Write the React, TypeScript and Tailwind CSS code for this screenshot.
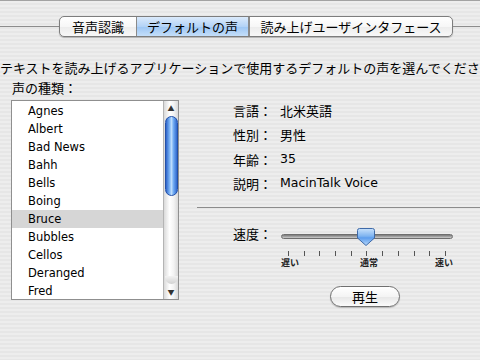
import React from 'react';

const VOICES = ['Agnes', 'Albert', 'Bad News', 'Bahh', 'Bells', 'Boing', 'Bruce', 'Bubbles', 'Cellos', 'Deranged', 'Fred'];

const INFO = [
  { label: '言語：', value: '北米英語' },
  { label: '性別：', value: '男性' },
  { label: '年齢：', value: '35' },
  { label: '説明：', value: 'MacinTalk Voice' },
];

const TABS = [
  { name: '音声認識', width: 'w-[76px]', selected: false },
  { name: 'デフォルトの声', width: 'w-[113px]', selected: true },
  { name: '読み上げユーザインタフェース', width: 'flex-1', selected: false },
];

const Thumb: React.FC = () => (
  <svg width="20" height="20" viewBox="0 0 20 20">
    <defs>
      <linearGradient id="thumbFill" x1="0" y1="0" x2="0" y2="1">
        <stop offset="0" stopColor="#c9e2fb" />
        <stop offset="0.45" stopColor="#7fb4f0" />
        <stop offset="0.55" stopColor="#5d9ded" />
        <stop offset="1" stopColor="#b7d8fa" />
      </linearGradient>
    </defs>
    <path d="M3.5 1.5 H16.5 Q18.5 1.5 18.5 3.5 V11 L10 18.5 L1.5 11 V3.5 Q1.5 1.5 3.5 1.5 Z" fill="url(#thumbFill)" stroke="#3f6aa8" strokeWidth="1" />
  </svg>
);

export default function App() {
  return (
    <div className="w-[480px] h-[360px] overflow-hidden border-t border-[#a2a2a2] bg-[repeating-linear-gradient(180deg,#ededed_0px,#ededed_2px,#e6e6e6_2px,#e6e6e6_4px)] text-[13px] text-black font-['Noto_Sans_CJK_JP',sans-serif]">
      {/* tabs */}
      <div className="mt-[15px] flex items-center h-[21px]">
        <div className="h-px w-[59px] bg-[#8c8c8c]" />
        <div className="flex h-[21px] w-[394px] rounded-[5px] border border-[#7d7d7d] overflow-hidden bg-[linear-gradient(#ffffff,#f7f7f7_50%,#ececec_51%,#f8f8f8)] shadow-[0_1px_1px_rgba(0,0,0,0.25)]">
          {TABS.map((t, i) => (
            <div
              key={t.name}
              className={
                'flex items-center justify-center leading-none ' +
                t.width +
                (i > 0 ? ' border-l border-[#8a8a8a]' : '') +
                (t.selected
                  ? ' border-r border-[#6b8ec4] bg-[linear-gradient(#dbeafb,#b3d3f7_50%,#9cc6f4_51%,#c4def9)]'
                  : '')
              }
            >
              {t.name}
            </div>
          ))}
        </div>
        <div className="h-px flex-1 bg-[#8c8c8c]" />
      </div>

      <p className="mt-[23px] whitespace-nowrap leading-[16px]">
        テキストを読み上げるアプリケーションで使用するデフォルトの声を選んでください。
      </p>
      <p className="mt-[4px] pl-[12px] leading-[16px]">声の種類：</p>

      <div className="mt-[4px] flex">
        {/* voice list */}
        <div className="ml-[11px] flex h-[200px] w-[168px] border border-[#8f8f8f] bg-white">
          <div className="flex-1 pt-[1px] font-['DejaVu_Sans',sans-serif] text-[11.5px]">
            {VOICES.map((v) => (
              <div
                key={v}
                className={'h-[18px] pl-[16px] leading-[18px] ' + (v === 'Bruce' ? 'bg-[#d6d6d6]' : '')}
              >
                {v}
              </div>
            ))}
          </div>
          <div className="flex w-[15px] flex-col border-l border-[#b4b4b4] bg-[linear-gradient(90deg,#dadada,#ffffff_40%,#f3f3f3_70%,#d9d9d9)]">
            <div className="flex h-[15px] items-center justify-center text-[7px] leading-none text-[#333]">▲</div>
            <div className="mx-auto h-[80px] w-[13px] rounded-full border border-[#2451a8] bg-[linear-gradient(90deg,#2d62c8,#74aef3_30%,#bcdcfc_50%,#6aa6f1_70%,#3068cd)]" />
            <div className="flex-1" />
            <div className="mx-auto mb-[1px] h-[8px] w-[13px] rounded-b-full bg-[linear-gradient(#f2f2f2,#d2d2d2)]" />
            <div className="flex h-[14px] items-center justify-center text-[7px] leading-none text-[#333]">▼</div>
          </div>
        </div>

        {/* details */}
        <div className="ml-[18px] flex-1">
          <div className="mt-[-2px] pl-[36px]">
            {INFO.map((r) => (
              <div key={r.label} className="flex h-[24.5px] items-center">
                <span className="w-[47px]">{r.label}</span>
                <span className={r.value === 'MacinTalk Voice' || r.value === '35' ? "font-['DejaVu_Sans',sans-serif] text-[12.5px]" : ''}>
                  {r.value}
                </span>
              </div>
            ))}
          </div>
          <div className="mt-[11px] h-px bg-[#8c8c8c]" />

          {/* speed slider */}
          <div className="mt-[18px] ml-[36px] flex">
            <span className="w-[48px] leading-[16px]">速度：</span>
            <div className="w-[172px]">
              <div className="relative h-[20px]">
                <div className="absolute left-0 right-0 top-[8px] h-[5px] rounded-full border border-[#6e6e6e] bg-[linear-gradient(#7a7a7a,#a9a9a9_60%,#cfcfcf)]" />
                <div className="absolute left-[75px] top-[1px]">
                  <Thumb />
                </div>
              </div>
              <div className="mt-[5px] ml-[7px] flex w-[158px] justify-between">
                {Array.from({ length: 11 }).map((_, i) => (
                  <div key={i} className="h-[5px] w-px bg-[#555]" />
                ))}
              </div>
              <div className="mt-[1px] flex justify-between text-[9px] font-bold leading-[12px] text-[#222]">
                <span>遅い</span>
                <span className="ml-[4px]">通常</span>
                <span>速い</span>
              </div>
            </div>
          </div>

          <div className="mt-[17px] ml-[133px] flex h-[21px] w-[70px] items-center justify-center rounded-full border border-[#707070] bg-[linear-gradient(#ffffff,#f4f4f4_50%,#e6e6e6_51%,#fbfbfb)] shadow-[0_1px_1px_rgba(0,0,0,0.2)] leading-none">
            再生
          </div>
        </div>
      </div>
    </div>
  );
}
